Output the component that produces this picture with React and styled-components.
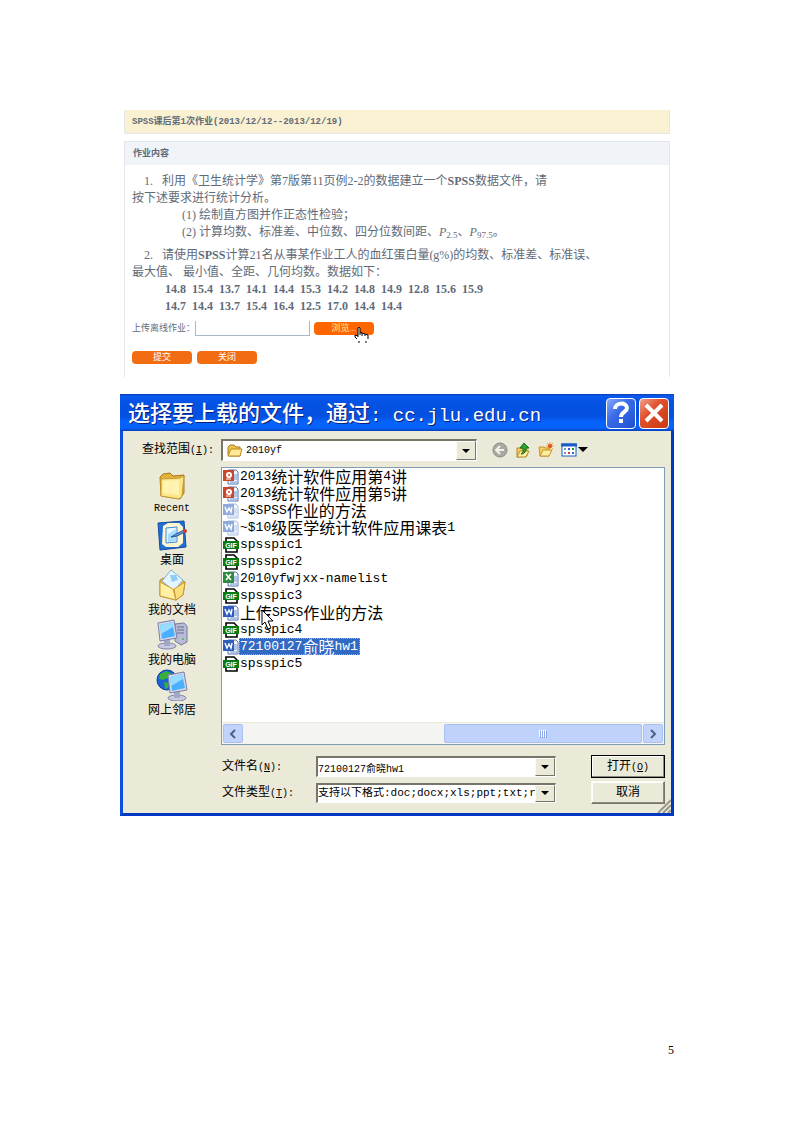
import React, { useState } from 'react';
import styled, { createGlobalStyle } from 'styled-components';

const GlobalStyle = createGlobalStyle`
  * {
    box-sizing: border-box;
  }
  body {
    margin: 0;
    background: #fff;
  }
  button, input, select {
    font: inherit;
    color: inherit;
    margin: 0;
    padding: 0;
    border: none;
    border-radius: 0;
    background: none;
    outline: none;
  }
  svg {
    display: block;
    flex: none;
  }
`;

const Page = styled.main`
  padding: 110px 119px 64px 120px;
  font-family: "Liberation Serif", "Noto Sans CJK SC", serif;
`;

/* ---------- homework form ---------- */

const Homework = styled.form`
  margin: 0 4px;
  color: #5f6b78;
`;

const HomeworkTitle = styled.h1`
  margin: 0 0 7px;
  padding: 0 7px;
  height: 24px;
  line-height: 22px;
  border: 1px solid #e3e6ea;
  border-top-color: #faf0d2;
  background: #faf0d2;
  font-family: "Liberation Mono", "Noto Sans CJK SC", monospace;
  font-size: 9px;
  font-weight: bold;
`;

const Panel = styled.section`
  border: 1px solid #e3e6ea;
  border-bottom: none;
  padding-bottom: 13px;
`;

const PanelTitle = styled.h2`
  margin: 0;
  padding: 0 8px;
  line-height: 23px;
  background: #f0f4f8;
  font-size: 9px;
  font-weight: bold;
`;

const Question = styled.div`
  margin: ${(props) => (props.$first ? '8px' : '6px')} 7px 0;
  font-size: 12px;
  line-height: 17px;
`;

const Line = styled.p`
  margin: 0;
  padding-left: ${(props) => props.$indent || 0}px;
  white-space: pre;
  font-weight: ${(props) => (props.$bold ? 'bold' : 'normal')};

  sub {
    font-size: 9px;
    line-height: 1;
    vertical-align: -2px;
  }
`;

const UploadRow = styled.div`
  display: flex;
  align-items: center;
  gap: 4px;
  margin: 6px 7px 0;
  font-size: 9px;
  line-height: 15px;

  label {
    width: 59px;
    white-space: nowrap;
  }
`;

const UploadInput = styled.input`
  width: 115px;
  height: 15px;
  border: 1px solid #a9b8c6;
  border-top: none;
`;

const OrangeButton = styled.button`
  width: 60px;
  height: 13px;
  border-radius: 4px;
  background: ${(props) => (props.$hot ? '#ff6600' : '#f26c12')};
  color: ${(props) => (props.$hot ? '#ffe9a8' : '#fff')};
  font-size: 9px;
  line-height: 13px;
  cursor: pointer;
`;

const BrowseWrap = styled.div`
  position: relative;
  display: flex;
`;

const HandCursor = styled.svg`
  position: absolute;
  left: 40px;
  top: 4px;
`;

const FormButtons = styled.div`
  display: flex;
  gap: 5px;
  margin: 15px 7px 0;
`;

/* ---------- file dialog ---------- */

const Dialog = styled.section`
  position: relative;
  margin-top: 17px;
  border: 3px solid #0a4fe0;
  border-top: none;
  border-right-color: #0038c4;
  border-bottom-color: #0038c4;
  background: #ebe9d8;
  color: #000;
  font-family: "Liberation Mono", "Noto Sans CJK SC", monospace;
  font-size: 10px;
`;

const TitleBar = styled.header`
  display: flex;
  align-items: center;
  gap: 3px;
  height: 37px;
  margin: 0 -3px;
  padding: 1px 5px 0 8px;
  background: linear-gradient(#0a3fae 0, #0a5af0 2px, #0453e4 8px, #0450e0 22px, #0562fb 28px, #0562fb 34px, #0440c0 37px);

  h2 {
    flex: 1;
    margin: 0;
    color: #fff;
    font-size: 19px;
    line-height: 30px;
    font-weight: 500;
    white-space: pre;
    text-shadow: 1px 1px 0 #0a1f7a;
  }
`;

const TitleButton = styled.button`
  display: flex;
  align-items: center;
  justify-content: center;
  width: 30px;
  height: 31px;
  border: 1px solid #fff;
  border-radius: 4px;
  background: ${(props) => (props.$close
    ? 'linear-gradient(135deg, #f0a08a, #e0502c 40%, #c83a12)'
    : 'linear-gradient(135deg, #88acf8, #3a6cea 40%, #1f50cc)')};
`;

const Cjk = styled.span`
  font-family: "Noto Sans CJK SC", sans-serif;
  font-size: ${(props) => props.$size}px;
`;

const DialogBody = styled.div`
  display: grid;
  grid-template-columns: 98px 1fr;
  row-gap: 6px;
  padding: 8px 6px 9px 0;
`;

const LookInLabel = styled.label`
  padding-left: 19px;
  line-height: 18px;
  white-space: nowrap;
`;

const LookInRow = styled.div`
  display: flex;
  align-items: center;
`;

const Combo = styled.div`
  display: flex;
  align-items: stretch;
  flex: 1;
  min-width: 0;
  height: ${(props) => props.$height}px;
  padding-left: ${(props) => props.$pad || 0}px;
  gap: ${(props) => (props.$pad ? 3 : 0)}px;
  border: 2px solid #fff;
  border-top-color: #77756a;
  border-left-color: #77756a;
  border-right-width: 1px;
  border-bottom-width: 1px;
  background: #fff;

  > svg {
    align-self: center;
  }

  input, select {
    flex: 1;
    width: 0;
    min-width: 0;
    appearance: none;
    font-size: ${(props) => props.$font || 10}px;
  }
`;

const dropFace = `
  display: flex;
  align-items: center;
  justify-content: center;
  width: 20px;
  border: 1px solid #fbfaf4;
  border-right-color: #77756a;
  border-bottom-color: #77756a;
  background: #ebe9d8;
`;

const DropButton = styled.button`
  ${dropFace}
`;

const DropMark = styled.span`
  ${dropFace}
`;

const Tools = styled.div`
  display: flex;
  align-items: center;
  gap: 7px;
  width: 188px;
  padding-left: 15px;

  button {
    display: flex;
    align-items: center;
  }
`;

const Places = styled.nav`
  display: flex;
  flex-direction: column;
`;

const Place = styled.button`
  display: flex;
  flex-direction: column;
  align-items: center;
  justify-content: flex-start;
  height: 50px;
  padding-top: 2px;
  line-height: 15px;
`;

const FileBox = styled.div`
  display: flex;
  flex-direction: column;
  min-height: 278px;
  border: 1px solid #7f9db9;
  background: #fff;
`;

const FileList = styled.ul`
  flex: 1;
  margin: 0;
  padding: 0 1px;
  list-style: none;
  font-size: 13px;
`;

const FileItem = styled.li`
  display: flex;
  align-items: center;
  position: relative;
  height: 17px;
  line-height: 17px;
  white-space: nowrap;
`;

const FileName = styled.span`
  display: flex;
  align-items: center;
  height: 17px;
  padding: 0 2px 0 1px;
  background: ${(props) => (props.$selected ? '#316ac5' : 'none')};
  color: ${(props) => (props.$selected ? '#fff' : '#000')};
  outline: ${(props) => (props.$selected ? '1px dotted #e0a040' : 'none')};
  outline-offset: -1px;
`;

const ArrowCursor = styled.svg`
  position: absolute;
  left: 38px;
  top: 5px;
  z-index: 1;
`;

const ScrollBar = styled.div`
  display: flex;
  gap: 1px;
  height: 22px;
  padding: 1px;
  background: #f4f4f2;
  border-top: 1px solid #ebe9d8;
`;

const ScrollButton = styled.button`
  display: flex;
  align-items: center;
  justify-content: center;
  width: 20px;
  border: 1px solid #a9c0f0;
  border-radius: 2px;
  background: #c1d3fb;
`;

const ScrollThumb = styled.div`
  display: flex;
  align-items: center;
  justify-content: center;
  width: 45%;
  margin-left: auto;
  border: 1px solid #a9c0f0;
  border-radius: 2px;
  background: #bfd2fb;
`;

const Fields = styled.div`
  grid-column: 2;
  display: grid;
  grid-template-columns: 95px 1fr 74px;
  row-gap: 3px;
  align-items: center;
  padding-top: 4px;

  label {
    padding-left: 1px;
    white-space: nowrap;
    line-height: 18px;
  }

  ${Combo} {
    margin-right: 35px;
  }
`;

const DialogButton = styled.button`
  height: 23px;
  line-height: 18px;
  background: #ebe9d8;
  border: 1px solid ${(props) => (props.$default ? '#000' : '#fbfaf4')};
  border-right-color: ${(props) => (props.$default ? '#000' : '#77756a')};
  border-bottom-color: ${(props) => (props.$default ? '#000' : '#77756a')};
  box-shadow: inset -1px -1px 0 #8d8b7e, inset 1px 1px 0 #fff;
`;

const SizeGrip = styled.svg`
  position: absolute;
  right: 0;
  bottom: 0;
`;

const PageNumber = styled.footer`
  margin-top: 227px;
  text-align: right;
  font-size: 12px;
  line-height: 14px;
`;

// latin runs keep the parent size, chinese runs get their own
const Mixed = ({ text, size = 12 }) => (
  <>
    {text.split(/([\u3000-\uffef]+)/).map((part, i) => (
      i % 2 ? <Cjk key={i} $size={size}>{part}</Cjk> : part
    ))}
  </>
);

const DownArrow = () => (
  <svg width="8" height="4" viewBox="0 0 8 4"><path d="M0 0H8L4 4Z" fill="#000" /></svg>
);

const Folder = ({ size }) => (
  <svg width={size} height={size} viewBox="0 0 32 32">
    <path d="M4 8L7 5L14 4L17 7L28 6V24L24 30L5 27Z" fill="#e3b23a" stroke="#a87a18" />
    <path d="M5 10L24 9L28 7L26 27L23 30L5 27Z" fill="#fce68c" stroke="#c89a30" />
    <path d="M7 12L23 11V26L7 24Z" fill="#fff3ae" />
  </svg>
);

const OpenFolder = () => (
  <svg width="16" height="16" viewBox="0 0 16 16">
    <path d="M1 4L3 2H7L9 4H13V13H2L1 12Z" fill="#f0c24a" stroke="#a87a18" />
    <path d="M1 13L4 6H15L13 13Z" fill="#ffea98" stroke="#b98a20" />
  </svg>
);

const DesktopIcon = () => (
  <svg width="32" height="32" viewBox="0 0 32 32">
    <path d="M2 4L28 2L30 28L4 31Z" fill="#1f6fd6" stroke="#134a9c" />
    <path d="M7 7L12 4H23L27 8V24L22 28H10L6 25Z" fill="#fff6cf" />
    <path d="M10 9L21 8V23L10 24Z" fill="#e9f7ff" stroke="#3a8ae0" />
    <path d="M12 15L20 10V22L12 23Z" fill="#a8dcff" />
    <path d="M15 18L20 15L28 11L29 13L21 17Z" fill="#6c9cd8" stroke="#2a5490" />
    <circle cx="29" cy="12" r="2" fill="#d83a2a" />
  </svg>
);

const DocumentsIcon = () => (
  <svg width="32" height="32" viewBox="0 0 32 32">
    <path d="M4 11L8 9L25 11L29 13L27 26L20 31L4 27Z" fill="#eec250" stroke="#b08020" />
    <path d="M15 1L27 11L18 22L6 12Z" fill="#e4f6ff" stroke="#7ab0d8" />
    <path d="M14 6L20 6L22 11L16 13Z" fill="#90cdf5" />
    <path d="M4 13L17 20L20 31L4 27Z" fill="#fff0a4" stroke="#c89a30" />
    <path d="M20 31L18 20L29 13L27 26Z" fill="#fbdf7c" stroke="#c89a30" />
  </svg>
);

const Monitor = () => (
  <>
    <ellipse cx="11" cy="27" rx="9" ry="3" fill="#c9cbe0" stroke="#8084a8" />
    <path d="M8 20L14 19V27H8Z" fill="#a4a8c8" />
    <path d="M2 4L18 1L21 19L4 22Z" fill="#d6d8ea" stroke="#7a7ea8" />
    <path d="M4 6L16 3L19 17L6 20Z" fill="#48b0fc" />
    <path d="M4 6L16 3L17 8L5 15Z" fill="#98dcff" />
  </>
);

const ComputerIcon = () => (
  <svg width="32" height="32" viewBox="0 0 32 32">
    <path d="M19 5L28 4L31 7V23L25 26L19 22Z" fill="#b9bcd4" stroke="#7478a0" />
    <path d="M21 8H28M21 11H28M21 14H28" stroke="#666a94" />
    <circle cx="27" cy="20" r="1" fill="#3fc040" />
    <Monitor />
  </svg>
);

const NetworkIcon = () => (
  <svg width="32" height="32" viewBox="0 0 32 32">
    <circle cx="11" cy="11" r="10" fill="#1a62d8" stroke="#0c3c98" />
    <path d="M4 5L10 2L15 4L12 9L7 11L3 10ZM8 13L13 14L12 19L9 20Z" fill="#36b03a" />
    <g transform="translate(10 2)"><Monitor /></g>
  </svg>
);

const docColors = { ppt: '#c8482c', word: '#2f5cb8', tmp: '#8fa9dc', xls: '#2e8a3c' };
const docMarks = {
  ppt: <><circle cx="6" cy="6" r="2" fill="none" stroke="#fff" strokeWidth="2" /><path d="M3 10H8" stroke="#fff" /></>,
  word: <path d="M2 4L4 9L6 5L8 9L9 4" fill="none" stroke="#fff" strokeWidth="1.4" />,
  tmp: <path d="M2 4L4 9L6 5L8 9L9 4" fill="none" stroke="#fff" strokeWidth="1.4" />,
  xls: <path d="M3 3L8 9M8 3L3 9" stroke="#fff" strokeWidth="1.6" />,
};

const FileIcon = ({ type }) => {
  if (type === 'gif') {
    return (
      <svg width="16" height="16" viewBox="0 0 16 16">
        <path d="M3 5V1H11L14 4V5M3 11V15H14V11" fill="#fff" stroke="#000" strokeWidth="1.6" />
        <rect x="0" y="4" width="16" height="8" fill="#087a14" />
        <text x="8" y="11" textAnchor="middle" fontFamily="Liberation Sans, sans-serif" fontSize="7" fontWeight="bold" fill="#fff">GIF</text>
      </svg>
    );
  }
  return (
    <svg width="16" height="16" viewBox="0 0 16 16">
      <path d="M5 1H13L15 3V15H5Z" fill="#f5f9ff" stroke={type === 'tmp' ? '#a8bbdf' : '#5575b0'} />
      <path d="M11 6H14M11 8H14M11 10H14M7 13H14" stroke={type === 'tmp' ? '#b9c8e8' : '#6d90cc'} />
      <rect x="0" y="1" width="11" height="11" fill={docColors[type]} />
      {docMarks[type]}
    </svg>
  );
};

const places = [
  { name: 'Recent', icon: <Folder size={32} /> },
  { name: '桌面', icon: <DesktopIcon /> },
  { name: '我的文档', icon: <DocumentsIcon /> },
  { name: '我的电脑', icon: <ComputerIcon /> },
  { name: '网上邻居', icon: <NetworkIcon /> },
];

const files = [
  { name: '2013统计软件应用第4讲', type: 'ppt' },
  { name: '2013统计软件应用第5讲', type: 'ppt' },
  { name: '~$SPSS作业的方法', type: 'tmp' },
  { name: '~$10级医学统计软件应用课表1', type: 'tmp' },
  { name: 'spsspic1', type: 'gif' },
  { name: 'spsspic2', type: 'gif' },
  { name: '2010yfwjxx-namelist', type: 'xls' },
  { name: 'spsspic3', type: 'gif' },
  { name: '上传SPSS作业的方法', type: 'word' },
  { name: 'spsspic4', type: 'gif' },
  { name: '72100127俞晓hw1', type: 'word' },
  { name: 'spsspic5', type: 'gif' },
];

const HomeworkForm = () => (
  <Homework onSubmit={(e) => e.preventDefault()}>
    <HomeworkTitle>SPSS课后第1次作业(2013/12/12--2013/12/19)</HomeworkTitle>
    <Panel>
      <PanelTitle>作业内容</PanelTitle>
      <Question $first>
        <Line $indent={12}>1.   利用《卫生统计学》第7版第11页例2-2的数据建立一个<b>SPSS</b>数据文件，请</Line>
        <Line>按下述要求进行统计分析。</Line>
        <Line $indent={50}>(1) 绘制直方图并作正态性检验；</Line>
        <Line $indent={50}>
          (2) 计算均数、标准差、中位数、四分位数间距、<i>P</i><sub>2.5</sub>、<i>P</i><sub>97.5</sub>。
        </Line>
      </Question>
      <Question>
        <Line $indent={12}>2.   请使用<b>SPSS</b>计算21名从事某作业工人的血红蛋白量(g%)的均数、标准差、标准误、</Line>
        <Line>最大值、 最小值、全距、几何均数。数据如下：</Line>
        <Line $indent={33} $bold>14.8  15.4  13.7  14.1  14.4  15.3  14.2  14.8  14.9  12.8  15.6  15.9</Line>
        <Line $indent={33} $bold>14.7  14.4  13.7  15.4  16.4  12.5  17.0  14.4  14.4</Line>
      </Question>
      <UploadRow>
        <label htmlFor="upload">上传离线作业：</label>
        <UploadInput id="upload" type="text" />
        <BrowseWrap>
          <OrangeButton type="button" $hot>浏览...</OrangeButton>
          <HandCursor width="15" height="18" viewBox="0 0 15 18">
            <path d="M4 11V2Q5 0 6 2V7L12 8L14 10V14L12 17H5L1 11V9L4 11" fill="#fff" />
            <path d="M4 11V2Q5 0 6 2V9M6 6L8 7V10M8 7L11 8V10M11 8L14 9V13M4 10L1 9V11L3 13M5 15V17M12 15V17" fill="none" stroke="#000" />
          </HandCursor>
        </BrowseWrap>
      </UploadRow>
      <FormButtons>
        <OrangeButton type="submit">提交</OrangeButton>
        <OrangeButton type="button">关闭</OrangeButton>
      </FormButtons>
    </Panel>
  </Homework>
);

const FileDialog = () => {
  const [selected, setSelected] = useState('72100127俞晓hw1');

  return (
    <Dialog role="dialog" aria-labelledby="dialog-title">
      <TitleBar>
        <h2 id="dialog-title"><Mixed text="选择要上载的文件，通过: cc.jlu.edu.cn" size={22} /></h2>
        <TitleButton type="button" aria-label="帮助">
          <svg width="18" height="24" viewBox="0 0 18 24">
            <path d="M3 8C3 1 15 1 15 7C15 11 9 11 9 16" fill="none" stroke="#fff" strokeWidth="4" />
            <rect x="7" y="18" width="4" height="4" fill="#fff" />
          </svg>
        </TitleButton>
        <TitleButton type="button" aria-label="关闭" $close>
          <svg width="20" height="20" viewBox="0 0 20 20">
            <path d="M2 2L18 18M18 2L2 18" stroke="#fff" strokeWidth="4" />
          </svg>
        </TitleButton>
      </TitleBar>
      <DialogBody>
        <LookInLabel htmlFor="look-in"><Mixed text="查找范围" />(<u>I</u>):</LookInLabel>
        <LookInRow>
          <Combo $height={22} $pad={4}>
            <OpenFolder />
            <select id="look-in" defaultValue="2010yf">
              <option>2010yf</option>
            </select>
            <DropMark aria-hidden="true"><DownArrow /></DropMark>
          </Combo>
          <Tools>
            <button type="button" aria-label="后退">
              <svg width="16" height="16" viewBox="0 0 16 16">
                <circle cx="8" cy="8" r="7" fill="#aaa9a2" stroke="#8c8b84" />
                <path d="M8 4L4 8L8 12M4 8H12" fill="none" stroke="#f3f2ea" strokeWidth="2" />
              </svg>
            </button>
            <button type="button" aria-label="向上">
              <svg width="16" height="16" viewBox="0 0 16 16">
                <path d="M2 6H6L7 7H12V14L2 15Z" fill="#f5cf62" stroke="#b08828" />
                <path d="M2 15L5 9H14L11 15Z" fill="#ffee9e" stroke="#b08828" />
                <path d="M5 6L9 1L14 6H11C11 9 10 12 6 12C9 10 8 8 8 6Z" fill="#2ea52e" stroke="#146a18" />
              </svg>
            </button>
            <button type="button" aria-label="新建文件夹">
              <svg width="16" height="16" viewBox="0 0 16 16">
                <path d="M1 5H6L7 6H11V14H2Z" fill="#f5cf62" stroke="#c09430" />
                <path d="M2 14L5 8H14L11 14Z" fill="#ffee9e" stroke="#c09430" />
                <path d="M12 0V8M8 4H16M9 1L15 7M15 1L9 7" stroke="#f0a030" />
                <circle cx="12" cy="4" r="2" fill="#e0502c" />
              </svg>
            </button>
            <button type="button" aria-label="查看">
              <svg width="27" height="16" viewBox="0 0 27 16">
                <rect x="1" y="2" width="14" height="12" fill="#fff" stroke="#1a5cc8" />
                <path d="M0 3H16" stroke="#1a5cc8" strokeWidth="3" />
                <path d="M3 7H5M3 11H5" stroke="#8090b8" strokeWidth="2" />
                <path d="M7 7H9M11 11H13" stroke="#3060d0" strokeWidth="2" />
                <path d="M11 7H13" stroke="#209030" strokeWidth="2" />
                <path d="M7 11H9" stroke="#d04028" strokeWidth="2" />
                <path d="M17 5H27L22 10Z" fill="#000" />
              </svg>
            </button>
          </Tools>
        </LookInRow>
        <Places>
          {places.map((place) => (
            <Place key={place.name} type="button">
              {place.icon}
              <span><Mixed text={place.name} /></span>
            </Place>
          ))}
        </Places>
        <FileBox>
          <FileList>
            {files.map((file) => (
              <FileItem key={file.name} onClick={() => setSelected(file.name)}>
                <FileIcon type={file.type} />
                <FileName $selected={file.name === selected}>
                  <Mixed text={file.name} size={16} />
                </FileName>
                {file.name.startsWith('上传') && (
                  <ArrowCursor width="13" height="21" viewBox="0 0 13 21">
                    <path d="M1 1V16L4 13L7 20L10 19L7 12H12Z" fill="#fff" stroke="#000" />
                  </ArrowCursor>
                )}
              </FileItem>
            ))}
          </FileList>
          <ScrollBar>
            <ScrollButton type="button" aria-label="向左滚动">
              <svg width="8" height="10" viewBox="0 0 8 10"><path d="M6 1L2 5L6 9" fill="none" stroke="#4d6185" strokeWidth="2" /></svg>
            </ScrollButton>
            <ScrollThumb>
              <svg width="8" height="8" viewBox="0 0 8 8">
                <path d="M0.5 0V7M2.5 0V7M4.5 0V7M6.5 0V7" stroke="#fff" />
                <path d="M1.5 1V8M3.5 1V8M5.5 1V8M7.5 1V8" stroke="#8ca8e8" />
              </svg>
            </ScrollThumb>
            <ScrollButton type="button" aria-label="向右滚动">
              <svg width="8" height="10" viewBox="0 0 8 10"><path d="M2 1L6 5L2 9" fill="none" stroke="#4d6185" strokeWidth="2" /></svg>
            </ScrollButton>
          </ScrollBar>
        </FileBox>
        <Fields>
          <label htmlFor="file-name"><Mixed text="文件名" />(<u>N</u>):</label>
          <Combo $height={21}>
            <input id="file-name" type="text" value={selected} onChange={(e) => setSelected(e.target.value)} />
            <DropButton type="button" aria-label="展开"><DownArrow /></DropButton>
          </Combo>
          <DialogButton type="button" $default><Mixed text="打开" />(<u>O</u>)</DialogButton>
          <label htmlFor="file-type"><Mixed text="文件类型" />(<u>T</u>):</label>
          <Combo $height={20} $font={11}>
            <select id="file-type">
              <option>支持以下格式:doc;docx;xls;ppt;txt;rtf</option>
            </select>
            <DropMark aria-hidden="true"><DownArrow /></DropMark>
          </Combo>
          <DialogButton type="button"><Mixed text="取消" /></DialogButton>
        </Fields>
      </DialogBody>
      <SizeGrip width="14" height="14" viewBox="0 0 14 14">
        <path d="M1 14L14 1M6 14L14 6M11 14L14 11" stroke="#9a9888" strokeWidth="2" />
      </SizeGrip>
    </Dialog>
  );
};

const App = () => (
  <>
    <GlobalStyle />
    <Page>
      <HomeworkForm />
      <FileDialog />
      <PageNumber>5</PageNumber>
    </Page>
  </>
);

export default App;
